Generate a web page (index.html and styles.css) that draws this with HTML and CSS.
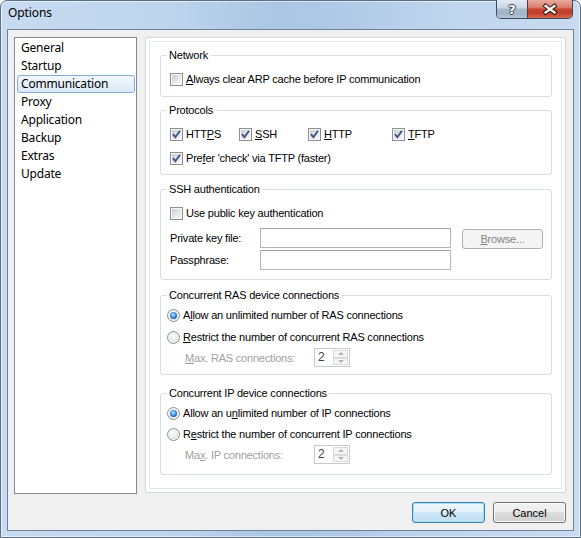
FILE: index.html
```html
<!DOCTYPE html>
<html>
<head>
<meta charset="utf-8">
<title>Options</title>
<link rel="stylesheet" href="styles.css">
</head>
<body>
<div class="window">
  <div class="titlebar">
    <span class="title">Options</span>
    <div class="caption-btns">
      <div class="cap-btn help"><span>?</span></div>
      <div class="cap-btn close">
        <svg width="45" height="18" viewBox="0 0 45 18">
          <path d="M18 6 L27 12.5 M27 6 L18 12.5" stroke="#3d1e18" stroke-width="4.6" stroke-linecap="square" fill="none"/>
          <path d="M18 6 L27 12.5 M27 6 L18 12.5" stroke="#ffffff" stroke-width="2.4" stroke-linecap="square" fill="none"/>
        </svg>
      </div>
    </div>
  </div>
  <div class="client">
    <div class="main">
      <ul class="nav">
        <li>General</li>
        <li>Startup</li>
        <li class="sel">Communication</li>
        <li>Proxy</li>
        <li>Application</li>
        <li>Backup</li>
        <li>Extras</li>
        <li>Update</li>
      </ul>
      <div class="panel">
        <fieldset class="grp g-network">
          <legend>Network</legend>
          <div class="row"><span class="cb"></span><span><u>A</u>lways clear ARP cache before IP communication</span></div>
        </fieldset>

        <fieldset class="grp g-protocols">
          <legend>Protocols</legend>
          <div class="protos">
            <div class="row"><span class="cb on"><svg width="11" height="11" viewBox="0 0 11 11"><path d="M2 5.2 L4.4 8.2 L9 1.8" stroke="#3e5686" stroke-width="1.9" fill="none"/></svg></span><span>HTT<u>P</u>S</span></div>
            <div class="row"><span class="cb on"><svg width="11" height="11" viewBox="0 0 11 11"><path d="M2 5.2 L4.4 8.2 L9 1.8" stroke="#3e5686" stroke-width="1.9" fill="none"/></svg></span><span><u>S</u>SH</span></div>
            <div class="row"><span class="cb on"><svg width="11" height="11" viewBox="0 0 11 11"><path d="M2 5.2 L4.4 8.2 L9 1.8" stroke="#3e5686" stroke-width="1.9" fill="none"/></svg></span><span><u>H</u>TTP</span></div>
            <div class="row"><span class="cb on"><svg width="11" height="11" viewBox="0 0 11 11"><path d="M2 5.2 L4.4 8.2 L9 1.8" stroke="#3e5686" stroke-width="1.9" fill="none"/></svg></span><span><u>T</u>FTP</span></div>
          </div>
          <div class="row row2"><span class="cb on"><svg width="11" height="11" viewBox="0 0 11 11"><path d="M2 5.2 L4.4 8.2 L9 1.8" stroke="#3e5686" stroke-width="1.9" fill="none"/></svg></span><span>Pre<u>f</u>er 'check' via TFTP (faster)</span></div>
        </fieldset>

        <fieldset class="grp g-ssh">
          <legend>SSH authentication</legend>
          <div class="row"><span class="cb"></span><span>Use public key authentication</span></div>
          <div class="keygrid">
            <span class="klabel">Private key file:</span>
            <span class="inp"></span>
            <span class="browse"><u>B</u>rowse...</span>
            <span class="klabel">Passphrase:</span>
            <span class="inp"></span>
          </div>
        </fieldset>

        <fieldset class="grp g-ras">
          <legend>Concurrent RAS device connections</legend>
          <div class="row radio"><span class="rb on"></span><span>A<u>l</u>low an unlimited number of RAS connections</span></div>
          <div class="row radio r2"><span class="rb"></span><span><u>R</u>estrict the number of concurrent RAS connections</span></div>
          <div class="maxrow">
            <span class="maxlabel"><u>M</u>ax. RAS connections:</span>
            <span class="spin"><span class="val">2</span><span class="btns"><span class="sb"><i class="up"></i></span><span class="sb"><i class="down"></i></span></span></span>
          </div>
        </fieldset>

        <fieldset class="grp g-ip">
          <legend>Concurrent IP device connections</legend>
          <div class="row radio"><span class="rb on"></span><span>Allow an u<u>n</u>limited number of IP connections</span></div>
          <div class="row radio r2 r2ip"><span class="rb"></span><span>R<u>e</u>strict the number of concurrent IP connections</span></div>
          <div class="maxrow">
            <span class="maxlabel">Ma<u>x</u>. IP connections:</span>
            <span class="spin"><span class="val">2</span><span class="btns"><span class="sb"><i class="up"></i></span><span class="sb"><i class="down"></i></span></span></span>
          </div>
        </fieldset>
      </div>
    </div>
    <div class="buttons">
      <button class="btn default">OK</button>
      <button class="btn">Cancel</button>
    </div>
  </div>
</div>
</body>
</html>
```
FILE: styles.css
```css
* { box-sizing: border-box; }
html, body { margin: 0; padding: 0; }
body {
  width: 581px;
  height: 538px;
  overflow: hidden;
  background: #ffffff;
  font-family: "Liberation Sans", Arial, sans-serif;
  font-size: 11px;
  letter-spacing: -0.2px;
  color: #000;
}

.window {
  width: 581px;
  height: 538px;
  border: 1px solid #5d6f84;
  border-radius: 7px 7px 0 0;
  background: linear-gradient(90deg, #c7dbf0 0%, #bed5ed 28%, #aac6e4 48%, #b0cae7 60%, #c0d6ee 78%, #c8dbf0 100%);
  box-shadow: inset 0 0 0 1px rgba(255,255,255,0.55);
  display: flex;
  flex-direction: column;
}

.titlebar {
  height: 28px;
  flex: none;
  display: flex;
  align-items: flex-start;
}
.title {
  font-family: "Noto Sans", sans-serif;
  font-size: 12px;
  letter-spacing: -0.1px;
  line-height: 16px;
  padding: 4px 0 0 7px;
  color: #000;
}
.caption-btns {
  margin-left: auto;
  margin-right: 7px;
  margin-top: -1px;
  height: 19px;
  display: flex;
  border: 1px solid #3b4c60;
  border-top: none;
  border-radius: 0 0 5px 5px;
  overflow: hidden;
}
.cap-btn {
  height: 18px;
  display: flex;
  align-items: center;
  justify-content: center;
}
.help {
  width: 30px;
  background: linear-gradient(#e2e9f2 0%, #c9d5e3 45%, #a9b9cc 50%, #a3b5ca 80%, #b9cadb 100%);
}
.help span {
  font-family: "DejaVu Sans", sans-serif;
  font-weight: bold;
  font-size: 13px;
  line-height: 13px;
  color: #fff;
  letter-spacing: 0;
  text-shadow: -1px 0 #334356, 1px 0 #334356, 0 -1px #334356, 0 1px #334356;
}
.close {
  width: 45px;
  border-left: 1px solid #5b3a36;
  background: linear-gradient(#e9aa9c 0%, #d9806f 40%, #c8432f 52%, #c5402a 75%, #d7694c 100%);
}

.client {
  flex: 1;
  margin: 0 6px 6px;
  border: 1px solid #71839a;
  background: #f0f0f0;
  padding: 7px 7px 7px 6px;
  display: flex;
  flex-direction: column;
}

.main {
  display: flex;
  gap: 8px;
  align-items: flex-start;
  height: 457px;
  flex: none;
}

.nav {
  list-style: none;
  margin: 0;
  width: 123px;
  height: 457px;
  border: 1px solid #828790;
  background: #fff;
  padding: 1px 1px 0 2px;
  font-family: "Noto Sans", sans-serif;
  font-size: 12px;
  letter-spacing: -0.2px;
}
.nav li {
  height: 18px;
  line-height: 16px;
  padding-left: 3px;
  border: 1px solid transparent;
  border-radius: 3px;
  color: #000;
}
.nav li.sel {
  border-color: #84acdd;
  background: linear-gradient(#f2f8fe, #dce9f9);
}

.panel {
  width: 421px;
  height: 456px;
  border: 1px solid #d3d8dd;
  border-radius: 2px;
  background: #fff;
  box-shadow: inset 0 0 0 3px #fff, inset 0 0 0 4px #e6e8eb;
  padding: 11px 13px 0 14px;
}

.grp {
  margin: 0;
  min-width: 0;
  border: 1px solid #d5dfe5;
  border-radius: 3px;
  padding: 9px;
}
.grp legend {
  padding: 0 2px;
  margin-left: -3px;
  line-height: 13px;
}
.g-protocols { margin-top: 7px; padding-bottom: 8px; }
.g-ssh { margin-top: 8px; }
.g-ras { margin-top: 9px; padding-top: 5px; padding-bottom: 7px; }
.g-ip { margin-top: 12px; padding-top: 5px; padding-bottom: 10px; }

.row {
  display: flex;
  align-items: center;
  gap: 3px;
  height: 16px;
  white-space: nowrap;
}
.row2 { margin-top: 8px; }
.radio { margin-left: -3px; }
.r2 { margin-top: 6px; }
.r2ip { margin-top: 5px; }

.protos {
  display: grid;
  grid-template-columns: 69px 69px 84px auto;
}

.cb {
  flex: none;
  width: 13px;
  height: 13px;
  border: 1px solid #8e8f8f;
  background: linear-gradient(135deg, #c3c8cf 0%, #dfe2e6 45%, #f3f4f5 80%, #fafafa 100%);
  box-shadow: inset 0 0 0 1px #f7f7f7;
  display: flex;
}
.cb svg { display: block; }

.rb {
  flex: none;
  width: 13px;
  height: 13px;
  border-radius: 50%;
  border: 1px solid #8e8f8f;
  background: radial-gradient(circle at 45% 40%, #ffffff 0%, #ececec 45%, #c6c9ce 100%);
  box-shadow: inset 0 0 0 1px #f6f6f6;
  display: flex;
  align-items: center;
  justify-content: center;
}
.rb.on::after {
  content: "";
  width: 7px;
  height: 7px;
  border-radius: 50%;
  background: radial-gradient(circle at 45% 40%, #c4e6ff 0%, #4c9be6 40%, #1658a8 75%, #0d3f7d 100%);
}

.keygrid {
  display: grid;
  grid-template-columns: 90px 191px 92px;
  grid-auto-rows: 20px;
  row-gap: 2px;
  margin-top: 7px;
  align-items: center;
}
.klabel { white-space: nowrap; }
.inp {
  height: 20px;
  border: 1px solid #b2b6bc;
  border-top-color: #a0a5ab;
  background: #fff;
}
.browse {
  height: 20px;
  margin-top: 1px;
  margin-left: 11px;
  border: 1px solid #adb2b5;
  border-radius: 3px;
  background: #f4f4f4;
  color: #838383;
  display: flex;
  align-items: center;
  justify-content: center;
}

.maxrow {
  display: flex;
  align-items: center;
  height: 19px;
  margin-top: 3px;
  padding-left: 15px;
  color: #a0a0a0;
}
.maxlabel { width: 129px; white-space: nowrap; }
.spin {
  width: 36px;
  height: 19px;
  border: 1px solid #c6cace;
  background: #fff;
  display: flex;
}
.spin .val {
  flex: 1;
  padding-left: 3px;
  line-height: 17px;
  color: #444;
  font-size: 12px;
}
.spin .btns {
  width: 16px;
  display: flex;
  flex-direction: column;
  padding: 1px 1px 1px 0;
}
.spin .sb {
  flex: 1;
  border: 1px solid #d8dadd;
  background: #f5f5f5;
  display: flex;
  align-items: center;
  justify-content: center;
}
.spin .up {
  width: 0;
  height: 0;
  border-left: 3px solid transparent;
  border-right: 3px solid transparent;
  border-bottom: 3px solid #b4b4b4;
}
.spin .down {
  width: 0;
  height: 0;
  border-left: 3px solid transparent;
  border-right: 3px solid transparent;
  border-top: 3px solid #b4b4b4;
}

.buttons {
  display: flex;
  justify-content: flex-end;
  gap: 8px;
  margin-top: 8px;
}
.btn {
  width: 73px;
  height: 21px;
  padding: 0;
  font: inherit;
  color: #000;
  border: 1px solid #707070;
  border-radius: 3px;
  background: linear-gradient(#f3f3f3 0%, #ebebeb 49%, #dddddd 50%, #d0d0d0 100%);
  box-shadow: inset 0 0 0 1px #fbfbfb;
}
.btn.default {
  border-color: #3c7fb1;
  background: linear-gradient(#eef7fd 0%, #e2f1fb 49%, #cfe7f7 50%, #bedff4 100%);
  box-shadow: inset 0 0 0 1px #a9dcf6;
}
```
